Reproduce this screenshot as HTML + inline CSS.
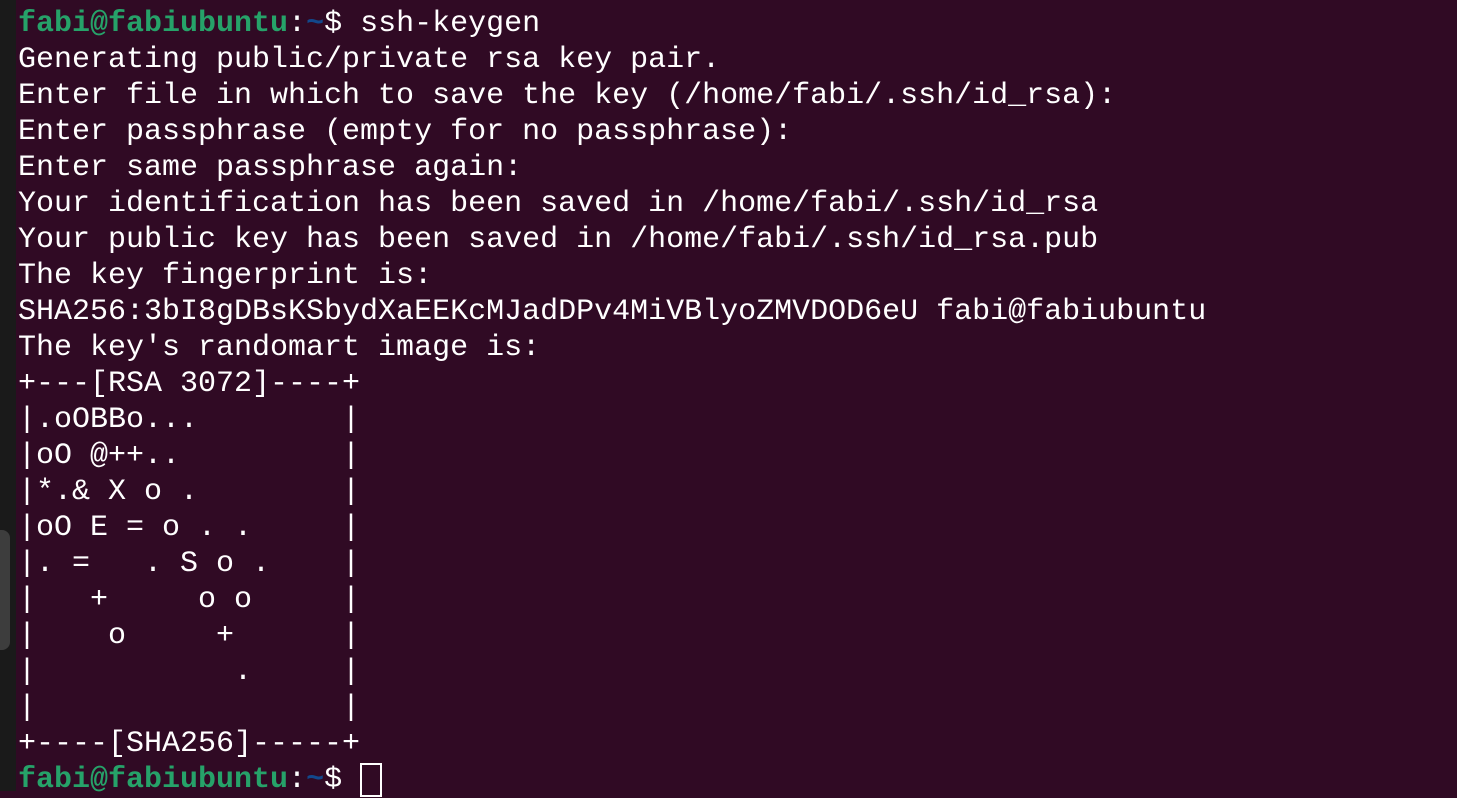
<!DOCTYPE html>
<html><head><meta charset="utf-8"><style>
html,body{margin:0;padding:0;}
body{width:1457px;height:791px;overflow:hidden;background:#300a24;position:relative;}
.strip{position:absolute;left:0;top:0;width:16px;height:791px;background:#1a1a1a;}
.sb{position:absolute;left:0;top:530px;width:10px;height:120px;background:#3d3d3d;border-radius:0 8px 8px 0;}
pre{position:absolute;left:18px;top:6px;margin:0;font-family:"Liberation Mono",monospace;font-size:30px;line-height:36px;color:#fff;}
.g{color:#26a269;font-weight:bold;}
.b{color:#12488b;font-weight:bold;}
.cur{display:inline-block;width:22px;height:34px;border:2px solid #fff;vertical-align:-10px;box-sizing:border-box;}
</style></head><body>
<div class="strip"></div><div class="sb"></div>
<pre><span class="g">fabi@fabiubuntu</span>:<span class="b">~</span>$ ssh-keygen
Generating public/private rsa key pair.
Enter file in which to save the key (/home/fabi/.ssh/id_rsa):
Enter passphrase (empty for no passphrase):
Enter same passphrase again:
Your identification has been saved in /home/fabi/.ssh/id_rsa
Your public key has been saved in /home/fabi/.ssh/id_rsa.pub
The key fingerprint is:
SHA256:3bI8gDBsKSbydXaEEKcMJadDPv4MiVBlyoZMVDOD6eU fabi@fabiubuntu
The key's randomart image is:
+---[RSA 3072]----+
|.oOBBo...        |
|oO @++..         |
|*.&amp; X o .        |
|oO E = o . .     |
|. =   . S o .    |
|   +     o o     |
|    o     +      |
|           .     |
|                 |
+----[SHA256]-----+
<span class="g">fabi@fabiubuntu</span>:<span class="b">~</span>$ <span class="cur"></span></pre>
</body></html>
